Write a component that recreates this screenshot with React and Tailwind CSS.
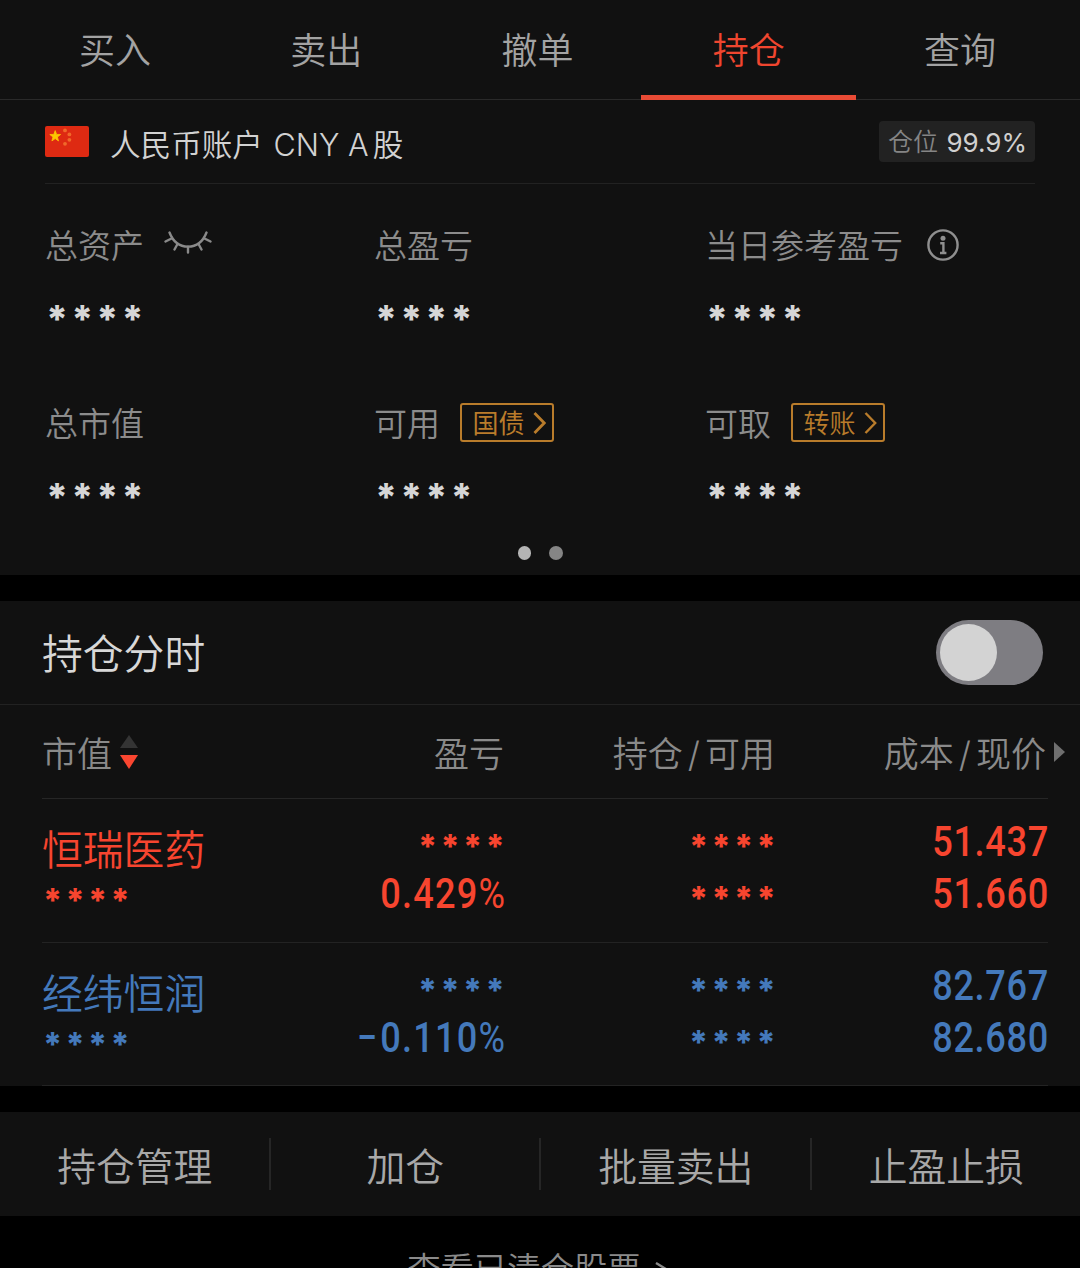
import { clsx } from "clsx";

const TABS = ["买入", "卖出", "撤单", "持仓", "查询"];

const METRICS = [
  { label: "总资产", extra: <ClosedEye /> },
  { label: "总盈亏" },
  { label: "当日参考盈亏", extra: <InfoIcon /> },
  { label: "总市值" },
  { label: "可用", extra: <LinkTag text="国债" bold /> },
  { label: "可取", extra: <LinkTag text="转账" /> },
];

const POSITIONS = [
  { name: "恒瑞医药", sign: "", percent: "0.429", cost: "51.437", price: "51.660", color: "text-[#f7452f]" },
  { name: "经纬恒润", sign: "−", percent: "0.110", cost: "82.767", price: "82.680", color: "text-[#4479bb]" },
];

const ACTIONS = ["持仓管理", "加仓", "批量卖出", "止盈止损"];

function ClosedEye() {
  return (
    <svg width="48" height="24" viewBox="0 0 48 24" fill="none" stroke="#8a8a8a" strokeWidth="2.4" strokeLinecap="round" className="mb-1 ml-5">
      <path d="M5.5 1.5C9 10.5 15.5 15.6 24 15.6S39 10.5 42.5 1.5" />
      <path d="M7.5 7.5 1.5 10.5M13.5 13 10.5 18.5M24 15.6V21.5M34.5 13 37.5 18.5M40.5 7.5 46.5 10.5" />
    </svg>
  );
}

function InfoIcon() {
  return (
    <svg width="32" height="32" viewBox="0 0 32 32" fill="none" stroke="#8f8f8f" className="ml-6">
      <circle cx="16" cy="16" r="14.6" strokeWidth="2.4" />
      <circle cx="16" cy="9.3" r="2.5" fill="#8f8f8f" stroke="none" />
      <path d="M13.2 14.2H16.4V24M13 24H19.4" strokeWidth="2.4" />
    </svg>
  );
}

function LinkTag({ text, bold }) {
  return (
    <span className="ml-[19.5px] flex h-[39px] w-[94px] items-center justify-between rounded-[3px] border-2 border-[#b97c2b] pr-[6px] pl-[11px] text-[#b97c2b]">
      <span className={clsx("pt-0.5 text-[26px] leading-none", bold && "font-normal")}>{text}</span>
      <svg width="13" height="22" viewBox="0 0 13 22" fill="none" stroke="currentColor" strokeWidth={bold ? 2.8 : 2.4}>
        <path d="M1.5 1 11.2 11 1.5 21" />
      </svg>
    </span>
  );
}

function Flag() {
  return (
    <svg width="44" height="31" viewBox="0 0 44 31">
      <rect width="44" height="31" rx="2" fill="#de2a12" />
      <path d="M10.2 4.6l1.4 3.8 4 .1-3.2 2.5 1.1 3.9-3.3-2.3-3.3 2.3 1.1-3.9-3.2-2.5 4-.1z" fill="#fcc800" stroke="#fcc800" strokeWidth="0.8" />
      <g fill="#f0692a">
        <circle cx="20" cy="4.4" r="1.9" />
        <circle cx="24.4" cy="8.4" r="1.9" />
        <circle cx="24.4" cy="13.8" r="1.9" />
        <circle cx="20" cy="17.8" r="1.9" />
      </g>
    </svg>
  );
}

function Mask({ large }) {
  return (
    <span
      className={clsx(
        "block font-['Inter'] font-extrabold",
        large ? "h-5 text-[38px] leading-[36px] tracking-[3px] text-[#d6d6d6]" : "-mr-[3px] h-[52px] text-[33px] leading-[61px] tracking-[3.3px]"
      )}
    >
      ****
    </span>
  );
}

function PositionRow({ name, sign, percent, cost, price, color }) {
  return (
    <div className={clsx("grid h-[143.5px] grid-cols-[190px_273px_270px_273px] border-b border-[#232323] pt-[17px]", color)}>
      <div>
        <div className="h-[54px] pt-1 text-[40.8px] leading-[60px]">{name}</div>
        <div className="pl-px">
          <Mask />
        </div>
      </div>
      <div className="text-right">
        <Mask />
        <div className="origin-right scale-x-[0.86] font-['Roboto'] text-[42px] leading-[52px] font-medium tracking-[1.4px] whitespace-nowrap">
          {sign && <span className="mr-0.5">{sign}</span>}
          {percent}
          <span className="font-normal tracking-normal">%</span>
        </div>
      </div>
      <div className="pl-px text-right">
        <div className="-mr-px">
          <Mask />
          <Mask />
        </div>
      </div>
      <div className="-mr-px origin-right scale-x-[0.86] text-right font-['Roboto'] text-[42px] leading-[52px] font-medium tracking-[0.8px]">
        <div>{cost}</div>
        <div>{price}</div>
      </div>
    </div>
  );
}

export default function App() {
  return (
    <div className="h-[1268px] w-[1080px] overflow-hidden bg-black font-['Inter','Noto_Sans_CJK_SC',sans-serif] font-[350]">
      {/* Trade tabs */}
      <nav className="flex h-[100px] border-b border-[#2a2a2a] bg-[#111111] pr-[15px] pl-[9px]">
        {TABS.map((tab) => (
          <div key={tab} className={clsx("relative flex-1 pl-px text-center text-[36px] leading-[102px]", tab === "持仓" ? "text-[#f0462f]" : "text-[#a3a3a3]")}>
            {tab}
            {tab === "持仓" && <span className="absolute -inset-x-0.5 top-[95px] h-[5px] bg-[#e94b35]" />}
          </div>
        ))}
      </nav>

      {/* Account summary */}
      <section className="h-[475px] bg-[#111111] px-[45px]">
        <div className="flex h-[84px] items-center justify-between border-b border-[#222222]">
          <div className="flex items-center">
            <Flag />
            <span className="ml-[21px] pt-1.5 text-[30.6px] text-[#d2d2d2]">
              人民币账户 <span className="ml-0.5">CNY A</span>
              <span className="ml-1">股</span>
            </span>
          </div>
          <div className="flex h-[41px] w-[156px] items-center justify-between rounded-[4px] bg-[#222222] pt-0.5 pr-2 pl-[9px] text-[25px] text-[#858585]">
            仓位<span className="text-[26px] font-normal text-[#d0d0d0]">99.9%</span>
          </div>
        </div>

        <div className="grid grid-cols-[329px_331px_330px] pt-[35px]">
          {METRICS.map(({ label, extra }) => (
            <div key={label} className="h-[177.5px]">
              <div className="flex h-[52px] items-center text-[33px] text-[#8c8c8c]">
                <span className="pt-1">{label}</span>
                {extra}
              </div>
              <div className="pt-[30px] pl-px">
                <Mask large />
              </div>
            </div>
          ))}
        </div>

        {/* Page dots */}
        <div className="-mt-[28px] flex justify-center gap-[18px]">
          <span className="size-[13.5px] rounded-full bg-[#b4b4b4]" />
          <span className="size-[13.5px] rounded-full bg-[#858585]" />
        </div>
      </section>

      {/* Positions */}
      <section className="mt-[26px] h-[485px] bg-[#111111]">
        <div className="flex h-[104px] items-center justify-between border-b border-[#222222] pr-[37px] pl-[42px] text-[40.8px] text-[#d8d8d8]">
          <span className="pt-1">持仓分时</span>
          <span className="h-[65px] w-[107px] rounded-full bg-[#7e7d82] p-1">
            <span className="block size-[57px] rounded-full bg-[#d3d3d3]" />
          </span>
        </div>

        <div className="pr-8 pl-[42px]">
          <div className="grid h-[94px] grid-cols-[190px_273px_270px_273px] items-center border-b border-[#262626] text-[35px] text-[#8a8a8a]">
            <div className="flex items-center">
              <span className="pt-1.5">市值</span>
              <svg width="18" height="34" viewBox="0 0 18 34" className="ml-2">
                <path d="M9 0 18 13H0z" fill="#343434" />
                <path d="M9 34 0 20H18z" fill="#fa4630" />
              </svg>
            </div>
            <div className="pt-1.5 pr-px text-right">盈亏</div>
            <div className="pt-1.5 text-right">
              持仓<span className="mx-[5px]">/</span>可用
            </div>
            <div className="relative pt-1.5 pr-0.5 text-right">
              成本<span className="mx-[5px]">/</span>现价
              <svg width="11" height="20" viewBox="0 0 11 20" className="absolute top-1/2 -right-[17px] -translate-y-1/2">
                <path d="M0 0 11 10 0 20z" fill="#6f6f6f" />
              </svg>
            </div>
          </div>
          {POSITIONS.map((p) => (
            <PositionRow key={p.name} {...p} />
          ))}
        </div>
      </section>

      {/* Quick actions */}
      <section className="mt-[26px] flex h-[104px] items-center bg-[#111111]">
        {ACTIONS.map((action, i) => (
          <div key={action} className={clsx("h-[52px] flex-1 pl-px text-center text-[38.8px] leading-[58px] text-[#a8a8a8]", i < 3 && "border-r-2 border-[#262626]")}>
            {action}
          </div>
        ))}
      </section>

      <div className="flex items-center justify-center pt-7 pr-1 text-[33.4px] text-[#8a8a8a]">
        查看已清仓股票
        <svg width="14" height="16" viewBox="0 0 14 16" fill="none" stroke="currentColor" strokeWidth="2.4" className="mt-0.5 ml-3.5">
          <path d="M1 1 12.5 8 1 15" />
        </svg>
      </div>
    </div>
  );
}
